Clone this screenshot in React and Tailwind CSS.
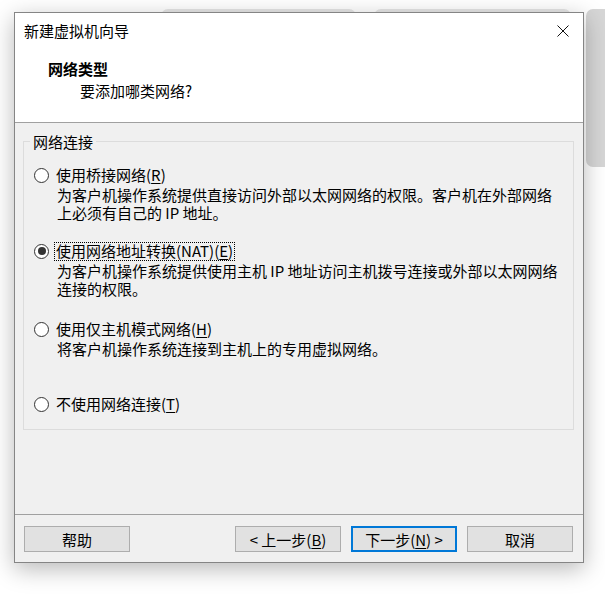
import React from 'react'

const font = "font-['Noto_Sans_CJK_SC','Noto_Sans',sans-serif]"

const Radio = ({ checked }) => (
  <span className="w-[15px] h-[15px] rounded-full border border-[#333] bg-white flex items-center justify-center shrink-0">
    {checked && <span className="w-[8px] h-[8px] rounded-full bg-[#333]" />}
  </span>
)

const Option = ({ checked, focused, label, mnemonic, lines, className = '' }) => (
  <div className={className}>
    <div className="flex items-center h-[20px] pl-[10px]">
      <Radio checked={checked} />
      <span
        className={`ml-[5px] px-[1px] h-[19px] flex items-center border border-dotted ${
          focused ? 'border-black' : 'border-transparent'
        }`}
      >
        {label}(<span className="underline underline-offset-2">{mnemonic}</span>)
      </span>
    </div>
    {lines && (
      <div className="pl-[33px] mt-[1px] leading-[18px]">
        {lines.map((l) => (
          <div key={l}>{l}</div>
        ))}
      </div>
    )}
  </div>
)

const Button = ({ children, primary }) => (
  <button
    className={`w-[106px] h-[26px] bg-[#e1e1e1] flex items-center justify-center text-[15px] leading-none ${
      primary ? 'border-2 border-[#0078d7]' : 'border border-[#adadad]'
    }`}
  >
    {children}
  </button>
)

export default function App() {
  return (
    <div className={`relative w-[605px] h-[606px] bg-white overflow-hidden text-black text-[15px] ${font}`}>
      {/* windows behind the dialog */}
      <div className="absolute left-[161px] top-[9px] w-[195px] h-[14px] rounded-t-[7px] bg-[#e6e6e6]" />
      <div className="absolute left-[374px] top-[9px] w-[197px] h-[14px] rounded-t-[7px] bg-[#e6e6e6]" />
      <div className="absolute left-[586px] top-[9px] w-[30px] h-[158px] rounded-[7px] bg-[#d6d6d6]" />

      <div className="pl-[14px] pt-[12px]">
        <div className="relative w-[570px] h-[551px] border border-[#858585] bg-[#f0f0f0] shadow-[0_6px_22px_rgba(0,0,0,0.28)] flex flex-col">
          {/* header */}
          <div className="h-[109px] bg-white border-b border-[#a0a0a0] box-content flex flex-col leading-[20px]">
            <div className="flex items-center justify-between mt-[8px] pl-[9px] pr-[14px]">
              <span>新建虚拟机向导</span>
              <svg width="12" height="12" viewBox="0 0 12 12" className="block">
                <path d="M0.5 0.5 L11.5 11.5 M11.5 0.5 L0.5 11.5" stroke="#111" strokeWidth="1" />
              </svg>
            </div>
            <div className="mt-[18px] pl-[33px] font-bold">网络类型</div>
            <div className="mt-[2px] pl-[65px]">要添加哪类网络?</div>
          </div>

          {/* body */}
          <div className="flex-1 px-[8px] pr-[9px]">
            <fieldset className="mt-[10px] h-[297px] border border-[#dcdcdc] leading-[20px]">
              <legend className="ml-[6px] px-[3px] leading-[17px]">网络连接</legend>
              <Option
                className="mt-[15px]"
                label="使用桥接网络"
                mnemonic="R"
                lines={[
                  '为客户机操作系统提供直接访问外部以太网网络的权限。客户机在外部网络',
                  '上必须有自己的 IP 地址。',
                ]}
              />
              <Option
                className="mt-[19px]"
                checked
                focused
                label="使用网络地址转换(NAT)"
                mnemonic="E"
                lines={[
                  '为客户机操作系统提供使用主机 IP 地址访问主机拨号连接或外部以太网网络',
                  '连接的权限。',
                ]}
              />
              <Option
                className="mt-[21px]"
                label="使用仅主机模式网络"
                mnemonic="H"
                lines={['将客户机操作系统连接到主机上的专用虚拟网络。']}
              />
              <Option className="mt-[36px]" label="不使用网络连接" mnemonic="T" />
            </fieldset>
          </div>

          {/* footer */}
          <div className="h-[48px] border-t border-[#a0a0a0] flex items-start pt-[11px] pl-[9px] pr-[10px]">
            <Button>帮助</Button>
            <div className="flex-1" />
            <div className="flex gap-[10px]">
              <Button>
                &lt; 上一步(<span className="underline underline-offset-2">B</span>)
              </Button>
              <Button primary>
                下一步(<span className="underline underline-offset-2">N</span>) &gt;
              </Button>
              <Button>取消</Button>
            </div>
          </div>
        </div>
      </div>
    </div>
  )
}
